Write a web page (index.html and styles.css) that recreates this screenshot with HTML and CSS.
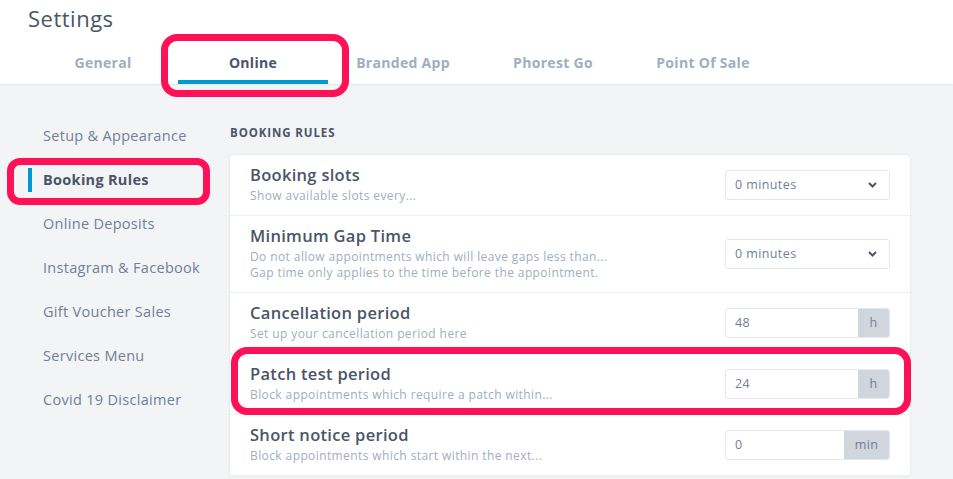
FILE: index.html
```html
<!DOCTYPE html>
<html>
<head>
<meta charset="utf-8">
<link rel="stylesheet" href="styles.css">
</head>
<body>
<div class="page">
  <header class="header">
    <h1 class="title">Settings</h1>
    <nav class="tabs">
      <div class="tab">General</div>
      <div class="tab active">Online</div>
      <div class="tab">Branded App</div>
      <div class="tab">Phorest Go</div>
      <div class="tab">Point Of Sale</div>
    </nav>
  </header>
  <div class="body">
    <aside class="side">
      <div class="side-item">Setup &amp; Appearance</div>
      <div class="side-item active">Booking Rules</div>
      <div class="side-item">Online Deposits</div>
      <div class="side-item">Instagram &amp; Facebook</div>
      <div class="side-item">Gift Voucher Sales</div>
      <div class="side-item">Services Menu</div>
      <div class="side-item">Covid 19 Disclaimer</div>
    </aside>
    <main class="main">
      <div class="section-title">BOOKING RULES</div>
      <div class="card">
        <div class="row">
          <div class="text">
            <div class="row-title">Booking slots</div>
            <div class="row-sub">Show available slots every...</div>
          </div>
          <div class="select"><span>0 minutes</span><svg class="chev" width="9" height="6" viewBox="0 0 9 6"><polyline points="1,1 4.5,4.5 8,1" fill="none" stroke="#4a5568" stroke-width="2"/></svg></div>
        </div>
        <div class="row">
          <div class="text">
            <div class="row-title">Minimum Gap Time</div>
            <div class="row-sub">Do not allow appointments which will leave gaps less than...</div>
            <div class="row-sub">Gap time only applies to the time before the appointment.</div>
          </div>
          <div class="select"><span>0 minutes</span><svg class="chev" width="9" height="6" viewBox="0 0 9 6"><polyline points="1,1 4.5,4.5 8,1" fill="none" stroke="#4a5568" stroke-width="2"/></svg></div>
        </div>
        <div class="row">
          <div class="text">
            <div class="row-title">Cancellation period</div>
            <div class="row-sub">Set up your cancellation period here</div>
          </div>
          <div class="group"><span class="val">48</span><span class="addon">h</span></div>
        </div>
        <div class="row">
          <div class="text">
            <div class="row-title">Patch test period</div>
            <div class="row-sub">Block appointments which require a patch within...</div>
          </div>
          <div class="group"><span class="val">24</span><span class="addon">h</span></div>
        </div>
        <div class="row">
          <div class="text">
            <div class="row-title">Short notice period</div>
            <div class="row-sub">Block appointments which start within the next...</div>
          </div>
          <div class="group"><span class="val">0</span><span class="addon wide">min</span></div>
        </div>
      </div>
    </main>
  </div>
  <div class="mark mark-tab"></div>
  <div class="mark mark-side"></div>
  <div class="mark mark-row"></div>
</div>
</body>
</html>
```
FILE: styles.css
```css
* { box-sizing: border-box; }
html, body { margin: 0; padding: 0; }
body {
  font-family: "Open Sans", "Liberation Sans", sans-serif;
  background: #f3f4f6;
  width: 953px;
  height: 479px;
  overflow: hidden;
}
.page { position: relative; height: 479px; }
.header {
  background: #fff;
  height: 84px;
  padding: 0 0 0 28px;
  box-shadow: 0 1px 2px rgba(0,0,0,0.06);
  position: relative;
}
.title {
  margin: 0;
  padding-top: 4px;
  font-size: 22px;
  font-weight: 500;
  color: #4a5568;
  line-height: 28px;
  height: 46px;
  letter-spacing: 0.5px;
}
.tabs { display: flex; }
.tab {
  width: 150px;
  height: 38px;
  text-align: center;
  font-size: 14px;
  font-weight: 700;
  color: #a0aec0;
  line-height: 34px;
  letter-spacing: 0.3px;
}
.tab.active {
  color: #4a5568;
  border-bottom: 4px solid #0099d5;
}
.body { display: flex; padding: 30px 0 0 28px; }
.side { width: 202px; flex: none; }
.side-item {
  height: 44px;
  line-height: 44px;
  padding-left: 11px;
  font-size: 14.5px;
  color: #718096;
  border-left: 4px solid transparent;
  letter-spacing: 0.3px;
}
.side-item.active {
  font-weight: 700;
  color: #4a5568;
  border-left: 4px solid #0099d5;
  line-height: 24px;
  height: 24px;
  margin: 10px 0;
}
.main { width: 680px; }
.section-title {
  font-size: 11.5px;
  font-weight: 700;
  color: #4a5568;
  letter-spacing: 0.9px;
  height: 41px;
  line-height: 38px;
}
.card {
  background: #fff;
  border-radius: 4px;
  box-shadow: 0 0 3px rgba(0,0,0,0.08);
}
.row {
  display: flex;
  align-items: center;
  justify-content: space-between;
  padding: 10px 20px 11px 20px;
  border-bottom: 1px solid #edf0f3;
}
.row-title {
  font-size: 16.5px;
  font-weight: 600;
  color: #4a5568;
  line-height: 20px;
  letter-spacing: 0.3px;
  margin-bottom: 3px;
}
.row-sub {
  font-size: 12px;
  color: #a0aec0;
  line-height: 16px;
  letter-spacing: 0.4px;
}
.select, .group {
  width: 165px;
  height: 30px;
  border: 1px solid #e2e8f0;
  border-radius: 3px;
  display: flex;
  align-items: center;
  font-size: 12.5px;
  color: #718096;
  letter-spacing: 0.4px;
}
.select { justify-content: space-between; padding: 0 12px 0 9px; }
.group { overflow: hidden; }
.val { flex: 1; padding-left: 9px; }
.addon {
  width: 31px;
  height: 100%;
  background: #d1d5dd;
  text-align: center;
  line-height: 28px;
  color: #718096;
}
.addon.wide { width: 45px; }
.mark {
  position: absolute;
  border: 7px solid #ff1158;
  border-radius: 16px;
}
.mark-tab { left: 161px; top: 34px; width: 188px; height: 63px; }
.mark-side { left: 7px; top: 158px; width: 203px; height: 47px; border-radius: 13px; }
.mark-row { left: 231px; top: 347px; width: 680px; height: 68px; }
```
